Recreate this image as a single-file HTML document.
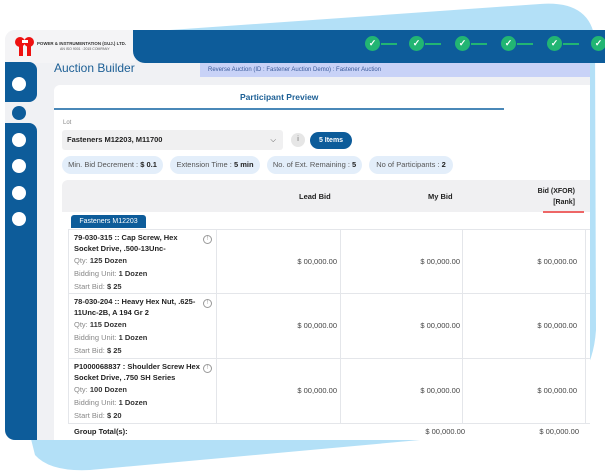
<!DOCTYPE html>
<html><head><meta charset="utf-8"><style>
*{margin:0;padding:0;box-sizing:border-box}
body{width:605px;height:472px;overflow:hidden;background:#fff;font-family:"Liberation Sans",sans-serif;position:relative}
.a{position:absolute}
.t{font-size:7.5px;color:#333}
.b{font-weight:bold;color:#222}
.g{color:#888}
.chip{position:absolute;top:156px;height:18px;border-radius:9px;background:#e3eefa;font-size:7.5px;color:#555;line-height:18px;text-align:center}
.chip b{color:#222}
.ck{position:absolute;top:36px;width:15px;height:15px;border-radius:50%;background:#22b573;color:#fff;font-size:9px;line-height:15px;text-align:center;font-weight:bold}
.ln{position:absolute;top:43px;height:1.5px;width:16px;background:#22b573}
.wc{position:absolute;left:12px;width:14px;height:14px;border-radius:50%;background:#fff}
.v{position:absolute;font-size:7.5px;color:#444;text-align:right;width:80px}
.vl{position:absolute;top:229px;width:1px;height:195px;background:#e4e6ea}
.hl{position:absolute;left:68px;width:522px;height:1px;background:#e4e6ea}
.info{position:absolute;width:9px;height:9px;border:1px solid #999;border-radius:50%;font-size:6px;color:#999;line-height:7px;text-align:center}
</style></head><body>
<svg class="a" style="left:0;top:0" width="605" height="472">
<path d="M170 30 L540 4 Q590 0 595 40 L596 330 Q594 360 580 380 L560 440 Z" fill="#b3e0f7"/>
<path d="M30 435 L420 440 L90 470 Q50 472 35 455 Z" fill="#b3e0f7"/>
</svg>
<div class="a" style="left:5px;top:30px;width:585px;height:410px;background:#f0f1f4;border-radius:10px 0 0 10px;overflow:hidden"></div>
<div class="a" style="left:5px;top:30px;width:130px;height:33px;background:#f4f4f6;border-radius:10px 0 0 0"></div>
<div class="a" style="left:14px;top:35px;width:22px;height:22px">
<svg width="22" height="22"><circle cx="6" cy="7" r="5" fill="#e11"/><circle cx="15" cy="7" r="5" fill="#e11"/><rect x="5" y="9" width="4" height="12" fill="#e11"/><rect x="13" y="9" width="4" height="12" fill="#e11"/><rect x="8" y="5" width="6" height="3" fill="#fff"/></svg>
</div>
<div class="a" style="left:37px;top:41px;font-size:4.4px;color:#333;font-weight:bold;white-space:nowrap">POWER &amp; INSTRUMENTATION (GUJ.) LTD.</div>
<div class="a" style="left:60px;top:47px;font-size:3.5px;color:#555">AN ISO 9001 : 2015 COMPANY</div>
<div class="a" style="left:133px;top:30px;width:472px;height:33px;background:#0d5c9a;border-radius:0 0 0 12px"></div>
<div class="ck" style="left:365px">✓</div><div class="ln" style="left:381px"></div>
<div class="ck" style="left:409px">✓</div><div class="ln" style="left:425px"></div>
<div class="ck" style="left:455px">✓</div><div class="ln" style="left:471px"></div>
<div class="ck" style="left:501px">✓</div><div class="ln" style="left:517px"></div>
<div class="ck" style="left:547px">✓</div><div class="ln" style="left:563px"></div>
<div class="ck" style="left:591px">✓</div>
<div class="a" style="left:5px;top:62px;width:32px;height:40px;background:#0d5c9a;border-radius:0 8px 8px 0"></div>
<div class="a" style="left:5px;top:123px;width:32px;height:317px;background:#0d5c9a;border-radius:0 8px 0 10px"></div>
<div class="wc" style="top:77px"></div>
<div class="a" style="left:12px;top:106px;width:14px;height:14px;border-radius:50%;background:#0d5c9a"></div>
<div class="wc" style="top:133px"></div><div class="wc" style="top:159px"></div><div class="wc" style="top:186px"></div><div class="wc" style="top:212px"></div>
<div class="a" style="left:54px;top:61px;font-size:12px;color:#1c5f95">Auction Builder</div>
<div class="a" style="left:200px;top:63px;width:390px;height:14px;background:#c8d2f7;font-size:6px;color:#3a5a9a;line-height:14px;padding-left:8px">Reverse Auction (ID : Fastener Auction Demo) : Fastener Auction</div>
<div class="a" style="left:54px;top:85px;width:536px;height:355px;background:#fff;border-radius:6px 0 0 0"></div>
<div class="a" style="left:240px;top:92px;font-size:8.5px;font-weight:bold;color:#1c5f95">Participant Preview</div>
<div class="a" style="left:54px;top:108px;width:450px;height:1.5px;background:#4a88b8"></div>
<div class="a" style="left:63px;top:120px;font-size:6px;color:#888">Lot</div>
<div class="a" style="left:62px;top:130px;width:221px;height:20px;background:#f0f0f1;border-radius:3px;font-size:7.5px;color:#222;line-height:20px;padding-left:5px;font-weight:bold">Fasteners M12203, M11700<span style="position:absolute;right:7px;font-weight:normal;color:#555">⌵</span></div>
<div class="a" style="left:291px;top:133px;width:14px;height:14px;border-radius:50%;background:#e6e6e6;font-size:7px;color:#666;text-align:center;line-height:14px">i</div>
<div class="a" style="left:310px;top:132px;width:42px;height:17px;border-radius:9px;background:#0d5c9a;color:#fff;font-size:7px;font-weight:bold;text-align:center;line-height:17px">5 Items</div>
<div class="chip" style="left:62px;width:101px">Min. Bid Decrement : <b>$ 0.1</b></div>
<div class="chip" style="left:170px;width:90px">Extension Time : <b>5 min</b></div>
<div class="chip" style="left:267px;width:95px">No. of Ext. Remaining : <b>5</b></div>
<div class="chip" style="left:369px;width:84px">No of Participants : <b>2</b></div>
<div class="a" style="left:62px;top:180px;width:528px;height:32px;background:#f0f0f2;border-radius:6px 0 0 0"></div>
<div class="a b" style="left:299px;top:192px;font-size:7.5px">Lead Bid</div>
<div class="a b" style="left:428px;top:192px;font-size:7.5px">My Bid</div>
<div class="a b" style="left:530px;top:186px;font-size:7px;text-align:right;width:45px;line-height:11px">Bid (XFOR)<br>[Rank]</div>
<div class="a" style="left:543px;top:211px;width:41px;height:1.5px;background:#e66"></div>
<div class="a" style="left:71px;top:215px;width:75px;height:13px;background:#0d5c9a;border-radius:3px 3px 0 0;color:#fff;font-size:7px;line-height:13px;text-align:center">Fasteners M12203</div>
<div class="hl" style="top:229px"></div><div class="hl" style="top:293px"></div><div class="hl" style="top:358px"></div><div class="hl" style="top:423px"></div>
<div class="vl" style="left:68px"></div><div class="vl" style="left:216px"></div><div class="vl" style="left:340px"></div><div class="vl" style="left:462px"></div><div class="vl" style="left:585px"></div>
<div class="a t" style="left:74px;top:233px;line-height:10.5px;width:124px"><b class="b">79-030-315 :: Cap Screw, Hex Socket Drive, .500-13Unc-</b><br><span style="line-height:13px"><span class="g">Qty:</span> <b>125 Dozen</b><br><span class="g">Bidding Unit:</span> <b>1 Dozen</b><br><span class="g">Start Bid:</span> <b>$ 25</b></span></div>
<div class="a t" style="left:74px;top:297px;line-height:10.5px;width:124px"><b class="b">78-030-204 :: Heavy Hex Nut, .625-11Unc-2B, A 194 Gr 2</b><br><span style="line-height:13px"><span class="g">Qty:</span> <b>115 Dozen</b><br><span class="g">Bidding Unit:</span> <b>1 Dozen</b><br><span class="g">Start Bid:</span> <b>$ 25</b></span></div>
<div class="a t" style="left:74px;top:362px;line-height:10.5px;width:128px"><b class="b">P1000068837 : Shoulder Screw Hex Socket Drive, .750 SH Series</b><br><span style="line-height:13px"><span class="g">Qty:</span> <b>100 Dozen</b><br><span class="g">Bidding Unit:</span> <b>1 Dozen</b><br><span class="g">Start Bid:</span> <b>$ 20</b></span></div>
<div class="info" style="left:203px;top:235px">!</div><div class="info" style="left:203px;top:299px">!</div><div class="info" style="left:203px;top:364px">!</div>
<div class="v" style="left:257px;top:257px">$ 00,000.00</div><div class="v" style="left:380px;top:257px">$ 00,000.00</div><div class="v" style="left:497px;top:257px">$ 00,000.00</div>
<div class="v" style="left:257px;top:321px">$ 00,000.00</div><div class="v" style="left:380px;top:321px">$ 00,000.00</div><div class="v" style="left:497px;top:321px">$ 00,000.00</div>
<div class="v" style="left:257px;top:386px">$ 00,000.00</div><div class="v" style="left:380px;top:386px">$ 00,000.00</div><div class="v" style="left:497px;top:386px">$ 00,000.00</div>
<div class="a b" style="left:74px;top:427px;font-size:7.5px">Group Total(s):</div>
<div class="v" style="left:385px;top:427px">$ 00,000.00</div><div class="v" style="left:499px;top:427px">$ 00,000.00</div>
</body></html>
